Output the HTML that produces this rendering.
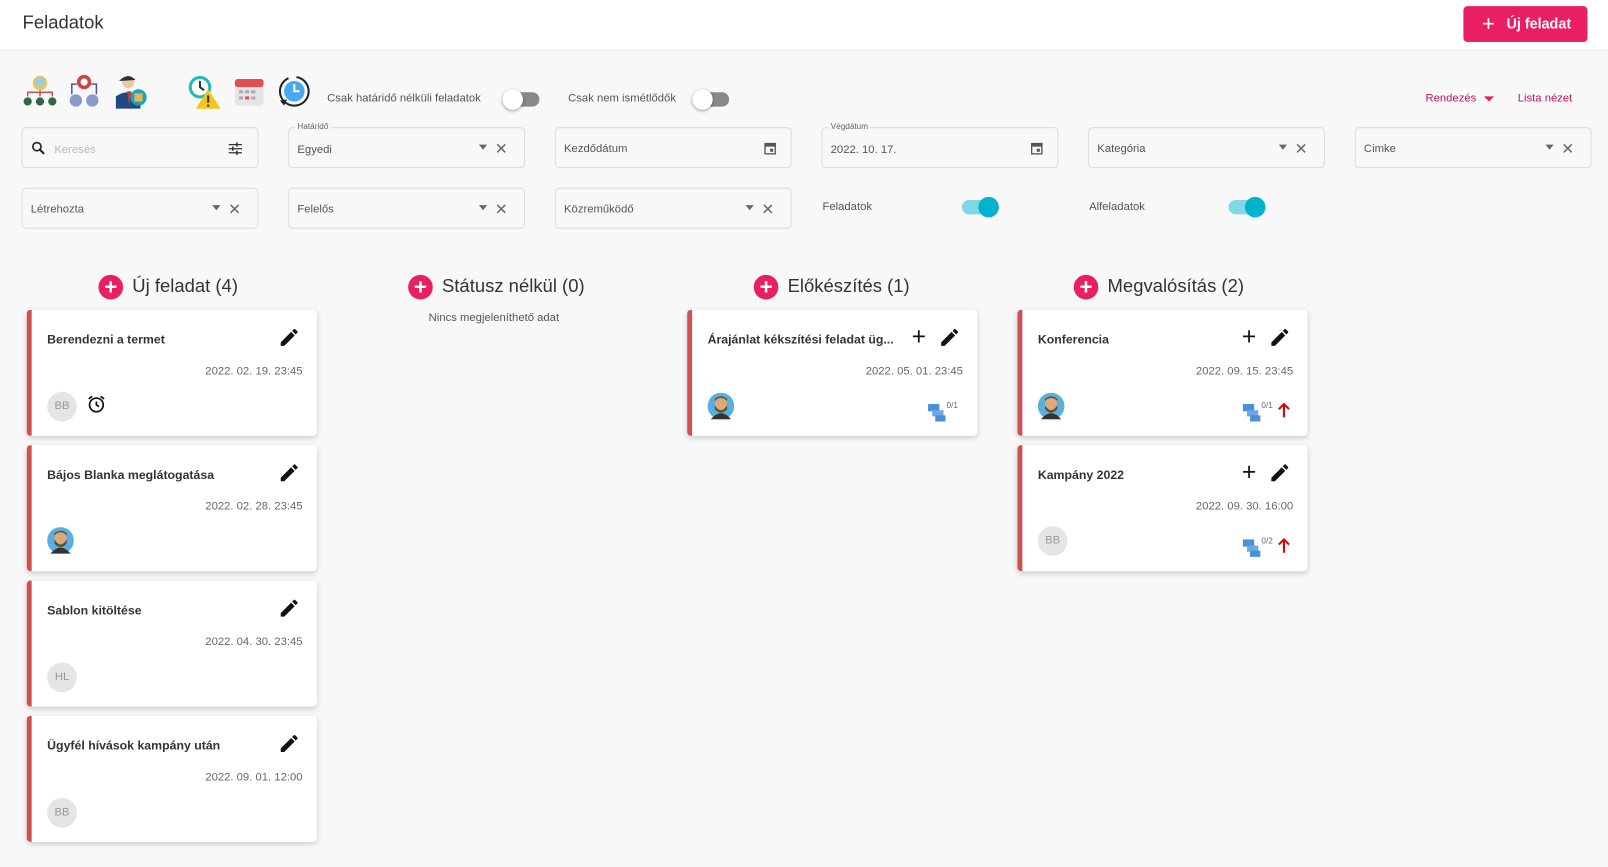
<!DOCTYPE html>
<html><head><meta charset="utf-8">
<style>
*{box-sizing:border-box;margin:0;padding:0}
html,body{width:1608px;height:866px;overflow:hidden;background:#f8f8f8}
#w{position:absolute;left:0;top:0;width:1568px;height:845px;transform:scale(1.02551);transform-origin:0 0;font-family:"Liberation Sans",sans-serif;color:#333}
.a{position:absolute}
.hdr{left:0;top:0;width:1568px;height:48px;background:#fff;box-shadow:0 1px 3px rgba(0,0,0,.08)}
.btn{left:1427px;top:6px;width:121px;height:35px;background:#e91e63;color:#fff;border-radius:4px;font-size:14px;font-weight:bold;line-height:35px;padding-left:42px}
.inp{width:231px;height:40px;border:1px solid #ddd;border-radius:4px;background:#f8f8f8;font-size:11px;color:#555}
.inp span.t{position:absolute;left:8px;top:14px}
.lbl{position:absolute;left:6px;top:-6px;font-size:8px;color:#666;background:#f8f8f8;padding:0 2px}
.dd{position:absolute;right:36px;top:16px;border-left:4px solid transparent;border-right:4px solid transparent;border-top:5px solid #666}
.x{position:absolute;right:16px;top:11px;font-size:15px;color:#666}
.card{width:283px;height:123px;background:#fff;border-left:5px solid #d05050;border-radius:4px;box-shadow:0 2px 5px rgba(0,0,0,.18)}
.ct{position:absolute;left:15px;top:22px;font-size:12px;font-weight:bold;color:#333}
.cd{position:absolute;right:14px;top:54px;font-size:11px;color:#666}
.av{position:absolute;left:15px;top:80px;width:29px;height:29px;border-radius:50%;background:#e5e5e5;color:#999;font-size:11px;text-align:center;line-height:29px}
.pen{position:absolute;right:16px;top:16px}
.plus{position:absolute;right:50px;top:13px;font-size:24px;color:#111}
.col{font-size:18px;color:#333}
.cp{display:inline-block;width:24px;height:24px;border-radius:50%;background:#e91e63;color:#fff;text-align:center;line-height:23px;font-size:22px;font-weight:bold;vertical-align:middle;margin-right:9px}
.tg{width:36px;height:14px;border-radius:7px}
.kn{width:20px;height:20px;border-radius:50%;top:-3px}
</style></head><body><div id="w">
<div class="a hdr"></div>
<div class="a" style="left:22px;top:12px;font-size:18px;color:#333">Feladatok</div>
<div class="a btn"><span style="position:absolute;left:18px;top:-1px;font-size:22px;font-weight:normal">+</span>Új feladat</div>

<svg class="a" style="left:22px;top:72px" width="34" height="34"><circle cx="17" cy="9" r="7" fill="#f6c04a"/><circle cx="17" cy="8" r="5" fill="#9cd"/><path d="M5 22V18H29V22M17 16V22" stroke="#c55" fill="none" stroke-width="1.5"/><circle cx="5" cy="27" r="4" fill="#364"/><circle cx="17" cy="27" r="4" fill="#364"/><circle cx="29" cy="27" r="4" fill="#364"/></svg>
<svg class="a" style="left:66px;top:72px" width="32" height="34"><circle cx="16" cy="8" r="7" fill="#c44"/><circle cx="16" cy="8" r="3.5" fill="#fff"/><path d="M4 20V10H9M28 20V10H23" stroke="#559" fill="none" stroke-width="1.5"/><circle cx="8" cy="26" r="6" fill="#89c"/><circle cx="24" cy="26" r="6" fill="#89c"/></svg>
<svg class="a" style="left:112px;top:72px" width="32" height="34"><circle cx="13" cy="8" r="6" fill="#f0c8a0"/><path d="M4 7Q13 -2 20 6" fill="#234"/><path d="M1 34V22Q13 14 25 22V34Z" fill="#1f4a80"/><path d="M12 17L14 32L16 17Z" fill="#c33"/><circle cx="23" cy="23" r="8" fill="#1aa0c0"/><rect x="19" y="19" width="8" height="8" fill="#e8b64a"/></svg>
<svg class="a" style="left:182px;top:73px" width="34" height="34"><circle cx="13" cy="12" r="11" fill="#2bb" /><circle cx="13" cy="12" r="8" fill="#fff"/><path d="M13 6V12L17 15" stroke="#333" stroke-width="2" fill="none"/><path d="M21 14L33 33H9Z" fill="#f5c518"/><rect x="20" y="20" width="2" height="7" fill="#333"/><rect x="20" y="29" width="2" height="2" fill="#333"/></svg>
<svg class="a" style="left:228px;top:74px" width="30" height="30"><rect x="1" y="3" width="28" height="26" rx="3" fill="#e5e5e5"/><rect x="1" y="3" width="28" height="8" rx="3" fill="#e05050"/><g fill="#aab"><rect x="5" y="14" width="4" height="3"/><rect x="11" y="14" width="4" height="3"/><rect x="17" y="14" width="4" height="3"/><rect x="5" y="20" width="4" height="3"/><rect x="17" y="20" width="4" height="3"/></g><rect x="11" y="20" width="4" height="3" fill="#e05050"/></svg>
<svg class="a" style="left:268px;top:72px" width="36" height="36"><circle cx="19" cy="17" r="14" fill="none" stroke="#222" stroke-width="2" stroke-dasharray="60 8"/><circle cx="19" cy="17" r="10" fill="#4aa8f0"/><path d="M19 10V17H24" stroke="#fff" stroke-width="2" fill="none"/><path d="M5 26L9 31L12 25Z" fill="#222"/></svg>

<div class="a" style="left:319px;top:90px;font-size:11px;color:#555">Csak határidő nélküli feladatok</div>
<div class="a tg" style="left:490px;top:90px;background:#888"><div class="a kn" style="left:0;background:#fff;box-shadow:0 1px 3px rgba(0,0,0,.4)"></div></div>
<div class="a" style="left:554px;top:90px;font-size:11px;color:#555">Csak nem ismétlődők</div>
<div class="a tg" style="left:675px;top:90px;background:#888"><div class="a kn" style="left:0;background:#fff;box-shadow:0 1px 3px rgba(0,0,0,.4)"></div></div>
<div class="a" style="left:1390px;top:90px;font-size:11px;color:#c2185b">Rendezés <span style="display:inline-block;margin-left:4px;border-left:5px solid transparent;border-right:5px solid transparent;border-top:5px solid #e91e63;vertical-align:middle"></span></div>
<div class="a" style="left:1480px;top:90px;font-size:11px;color:#c2185b">Lista nézet</div>

<div class="a inp" style="left:21px;top:124px"><svg class="a" style="left:9px;top:13px" width="13" height="13"><circle cx="5" cy="5" r="4" stroke="#222" stroke-width="1.6" fill="none"/><path d="M8 8L12 12" stroke="#222" stroke-width="2"/></svg><span class="t" style="left:31px;color:#bbb;top:15px">Keresés</span><svg class="a" style="left:200px;top:13px" width="14" height="14"><path d="M1 3H14M1 7H14M1 11H14" stroke="#333" stroke-width="1.2"/><path d="M9 1V5M5 5V9M9 9V13" stroke="#333" stroke-width="1.6"/></svg></div>
<div class="a inp" style="left:281px;top:124px"><span class="lbl">Határidő</span><span class="t" style="top:15px">Egyedi</span><span class="dd"></span><span class="x">✕</span></div>
<div class="a inp" style="left:541px;top:124px"><span class="t">Kezdődátum</span><svg class="a" style="right:14px;top:13px" width="12" height="13"><rect x="1" y="2" width="10" height="10" fill="none" stroke="#555" stroke-width="1.3"/><rect x="1" y="2" width="10" height="3" fill="#555"/><rect x="6" y="7" width="3" height="3" fill="#555"/></svg></div>
<div class="a inp" style="left:801px;top:124px"><span class="lbl">Végdátum</span><span class="t" style="top:15px">2022. 10. 17.</span><svg class="a" style="right:14px;top:13px" width="12" height="13"><rect x="1" y="2" width="10" height="10" fill="none" stroke="#555" stroke-width="1.3"/><rect x="1" y="2" width="10" height="3" fill="#555"/><rect x="6" y="7" width="3" height="3" fill="#555"/></svg></div>
<div class="a inp" style="left:1061px;top:124px"><span class="t">Kategória</span><span class="dd"></span><span class="x">✕</span></div>
<div class="a inp" style="left:1321px;top:124px"><span class="t">Cimke</span><span class="dd"></span><span class="x">✕</span></div>
<div class="a inp" style="left:21px;top:183px"><span class="t">Létrehozta</span><span class="dd"></span><span class="x">✕</span></div>
<div class="a inp" style="left:281px;top:183px"><span class="t">Felelős</span><span class="dd"></span><span class="x">✕</span></div>
<div class="a inp" style="left:541px;top:183px"><span class="t">Közreműködő</span><span class="dd"></span><span class="x">✕</span></div>
<div class="a" style="left:802px;top:196px;font-size:11px;color:#555">Feladatok</div>
<div class="a tg" style="left:938px;top:195px;background:#7fd8e6"><div class="a kn" style="left:16px;background:#00b3cc"></div></div>
<div class="a" style="left:1062px;top:196px;font-size:11px;color:#555">Alfeladatok</div>
<div class="a tg" style="left:1198px;top:195px;background:#7fd8e6"><div class="a kn" style="left:16px;background:#00b3cc"></div></div>

<div class="a col" style="left:96px;top:268px"><span class="cp">+</span>Új feladat (4)</div>
<div class="a col" style="left:398px;top:268px"><span class="cp">+</span>Státusz nélkül (0)</div>
<div class="a" style="left:418px;top:304px;font-size:11px;color:#555">Nincs megjeleníthető adat</div>
<div class="a col" style="left:735px;top:268px"><span class="cp">+</span>Előkészítés (1)</div>
<div class="a col" style="left:1047px;top:268px"><span class="cp">+</span>Megvalósítás (2)</div>

<svg width="0" height="0" style="position:absolute"><defs>
<symbol id="pen" viewBox="0 0 24 24"><path d="M3 17.25V21h3.75L17.81 9.94l-3.75-3.75L3 17.25zM20.71 7.04a1 1 0 000-1.41l-2.34-2.34a1 1 0 00-1.41 0l-1.830 1.83 3.75 3.75 1.83-1.83z" fill="#111"/></symbol>
<symbol id="face" viewBox="0 0 26 26"><circle cx="13" cy="13" r="13" fill="#5aaee0"/><path d="M3 26Q13 14 23 26Z" fill="#333"/><ellipse cx="13" cy="11" rx="6" ry="7" fill="#e0a878"/><path d="M7 12Q13 22 19 12V16Q13 23 7 16Z" fill="#553"/><path d="M7 8Q13 2 19 8V6Q13 1 7 6Z" fill="#553"/></symbol>
<symbol id="sub" viewBox="0 0 20 20"><rect x="1" y="2" width="11" height="7" fill="#4a90d9"/><rect x="5" y="8" width="11" height="6" fill="#6aa8e8"/><rect x="8" y="13" width="10" height="6" fill="#4a90d9"/></symbol>
<symbol id="up" viewBox="0 0 14 16"><path d="M7 15V3M2 7L7 2L12 7" stroke="#d00" stroke-width="2" fill="none"/></symbol>
</defs></svg>

<div class="a card" style="left:26px;top:302px"><div class="ct">Berendezni a termet</div><svg class="pen" width="22" height="22"><use href="#pen"/></svg><div class="cd">2022. 02. 19. 23:45</div><div class="av">BB</div><svg class="a" style="left:53px;top:82px" width="20" height="20" viewBox="0 0 24 24"><circle cx="12" cy="13" r="8" fill="none" stroke="#111" stroke-width="2"/><path d="M12 9V13L15 15M3 6L7 3M21 6L17 3" stroke="#111" stroke-width="2" fill="none"/></svg></div>
<div class="a card" style="left:26px;top:434px"><div class="ct">Bájos Blanka meglátogatása</div><svg class="pen" width="22" height="22"><use href="#pen"/></svg><div class="cd">2022. 02. 28. 23:45</div><svg class="a" style="left:15px;top:80px" width="26" height="26"><use href="#face"/></svg></div>
<div class="a card" style="left:26px;top:566px"><div class="ct">Sablon kitöltése</div><svg class="pen" width="22" height="22"><use href="#pen"/></svg><div class="cd">2022. 04. 30. 23:45</div><div class="av">HL</div></div>
<div class="a card" style="left:26px;top:698px"><div class="ct">Ügyfél hívások kampány után</div><svg class="pen" width="22" height="22"><use href="#pen"/></svg><div class="cd">2022. 09. 01. 12:00</div><div class="av">BB</div></div>

<div class="a card" style="left:670px;top:302px"><div class="ct">Árajánlat kékszítési feladat üg...</div><span class="plus">+</span><svg class="pen" width="22" height="22"><use href="#pen"/></svg><div class="cd">2022. 05. 01. 23:45</div><svg class="a" style="left:15px;top:81px" width="26" height="26"><use href="#face"/></svg><svg class="a" style="left:229px;top:90px" width="20" height="20"><use href="#sub"/></svg><span class="a" style="left:248px;top:89px;font-size:8px;color:#666">0/1</span></div>

<div class="a card" style="left:992px;top:302px"><div class="ct">Konferencia</div><span class="plus">+</span><svg class="pen" width="22" height="22"><use href="#pen"/></svg><div class="cd">2022. 09. 15. 23:45</div><svg class="a" style="left:15px;top:81px" width="26" height="26"><use href="#face"/></svg><svg class="a" style="left:214px;top:90px" width="20" height="20"><use href="#sub"/></svg><span class="a" style="left:233px;top:89px;font-size:8px;color:#666">0/1</span><svg class="a" style="left:248px;top:90px" width="14" height="16"><use href="#up"/></svg></div>
<div class="a card" style="left:992px;top:434px"><div class="ct">Kampány 2022</div><span class="plus">+</span><svg class="pen" width="22" height="22"><use href="#pen"/></svg><div class="cd">2022. 09. 30. 16:00</div><div class="av" style="top:79px">BB</div><svg class="a" style="left:214px;top:90px" width="20" height="20"><use href="#sub"/></svg><span class="a" style="left:233px;top:89px;font-size:8px;color:#666">0/2</span><svg class="a" style="left:248px;top:90px" width="14" height="16"><use href="#up"/></svg></div>
</div></body></html>
